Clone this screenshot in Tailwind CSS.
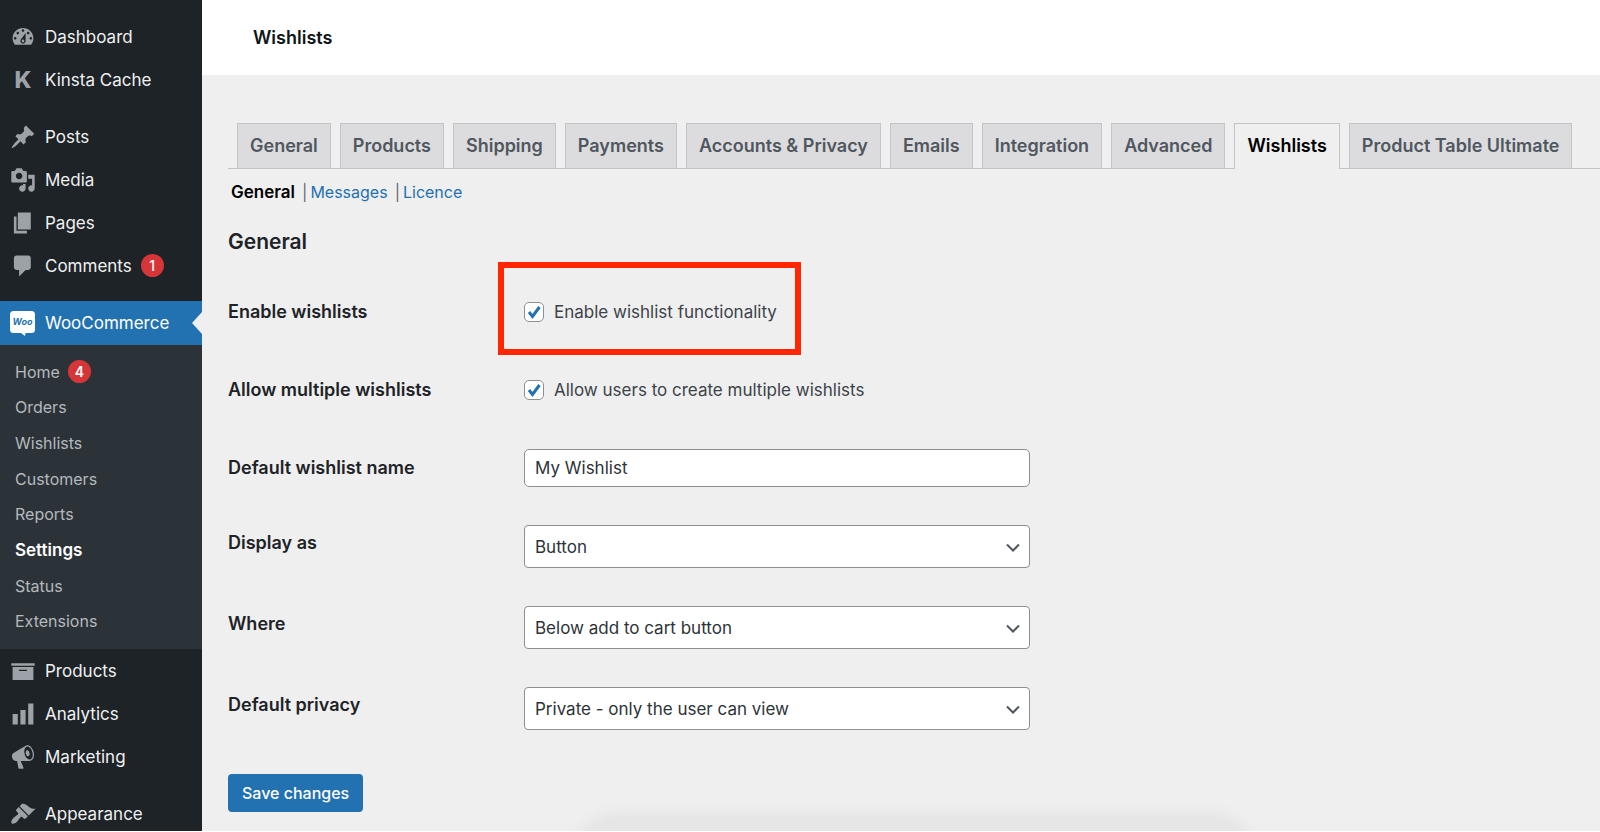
<!DOCTYPE html>
<html lang="en">
<head>
<meta charset="utf-8">
<meta name="viewport" content="width=device-width, initial-scale=1">
<title>Wishlists</title>
<script src="https://cdn.jsdelivr.net/npm/@tailwindcss/browser@4"></script>
</head>
<body class="flex h-screen overflow-hidden border-b border-white bg-[#efefef] font-['Inter','Liberation_Sans',sans-serif] text-[17px] leading-[24px] text-[#1d2327]">

<!-- Admin menu -->
<nav aria-label="Admin menu" class="flex w-[202px] shrink-0 flex-col bg-[#1d2327] pt-[15px] text-[#f0f0f1]">
  <a href="#" class="flex h-[43px] shrink-0 items-center gap-[9px] pl-[10px]">
    <svg class="size-[26px] shrink-0 fill-[#9ca2a7]" viewBox="0 0 20 20" aria-hidden="true"><path d="M3.76 16h12.48c1.1-1.37 1.76-3.11 1.76-5 0-4.42-3.58-8-8-8s-8 3.58-8 8c0 1.89.66 3.63 1.76 5zM10 4c.55 0 1 .45 1 1s-.45 1-1 1-1-.45-1-1 .45-1 1-1zM6 6c.55 0 1 .45 1 1s-.45 1-1 1-1-.45-1-1 .45-1 1-1zm8 0c.55 0 1 .45 1 1s-.45 1-1 1-1-.45-1-1 .45-1 1-1zm-5.37 5.55L12 7v6c0 1.1-.9 2-2 2s-2-.9-2-2c0-.57.24-1.08.63-1.45zM4 10c.55 0 1 .45 1 1s-.45 1-1 1-1-.45-1-1 .45-1 1-1zm12 0c.55 0 1 .45 1 1s-.45 1-1 1-1-.45-1-1 .45-1 1-1zm-5 3c0-.55-.45-1-1-1s-1 .45-1 1 .45 1 1 1 1-.45 1-1z"/></svg>
    Dashboard
  </a>
  <a href="#" class="flex h-[43px] shrink-0 items-center gap-[9px] pl-[10px]">
    <span class="w-[26px] text-center text-[23px] font-extrabold text-[#9ca2a7]" aria-hidden="true">K</span>
    Kinsta Cache
  </a>
  <a href="#" class="mt-[14px] flex h-[43px] shrink-0 items-center gap-[9px] pl-[10px]">
    <svg class="size-[26px] shrink-0 fill-[#9ca2a7]" viewBox="0 0 20 20" aria-hidden="true"><path d="M10.44 3.02l1.82-1.82 6.36 6.35-1.83 1.82c-1.05-.68-2.48-.57-3.41.36l-.75.75c-.92.93-1.04 2.35-.35 3.41l-1.83 1.82-2.41-2.41-2.8 2.79c-.42.42-3.38 2.71-3.8 2.29s1.86-3.39 2.28-3.81l2.79-2.79L4.1 9.36l1.83-1.82c1.05.69 2.48.57 3.4-.36l.75-.75c.93-.92 1.05-2.35.36-3.41z"/></svg>
    Posts
  </a>
  <a href="#" class="flex h-[43px] shrink-0 items-center gap-[9px] pl-[10px]">
    <svg class="size-[26px] shrink-0 fill-[#9ca2a7]" viewBox="0 0 20 20" aria-hidden="true"><path d="M13 11V4c0-.55-.45-1-1-1h-1.67L9 1H5L3.67 3H2c-.55 0-1 .45-1 1v7c0 .55.45 1 1 1h10c.55 0 1-.45 1-1zM7 4.5c1.38 0 2.5 1.12 2.5 2.5S8.38 9.5 7 9.5 4.5 8.38 4.5 7 5.62 4.5 7 4.5zM14 6h5v10.5c0 1.38-1.12 2.5-2.5 2.5S14 17.88 14 16.5s1.12-2.5 2.5-2.5c.17 0 .34.02.5.05V9h-3V6zm-4 8.05V13h2v3.5c0 1.38-1.12 2.5-2.5 2.5S7 17.88 7 16.5 8.12 14 9.5 14c.17 0 .34.02.5.05z"/></svg>
    Media
  </a>
  <a href="#" class="flex h-[43px] shrink-0 items-center gap-[9px] pl-[10px]">
    <svg class="size-[26px] shrink-0 fill-[#9ca2a7]" viewBox="0 0 20 20" aria-hidden="true"><path d="M6 15V2h10v13H6zm-1 1h8v2H3V5h2v11z"/></svg>
    Pages
  </a>
  <a href="#" class="flex h-[43px] shrink-0 items-center gap-[9px] pl-[10px]">
    <svg class="size-[26px] shrink-0 fill-[#9ca2a7]" viewBox="0 0 20 20" aria-hidden="true"><path d="M5 2h9c1.1 0 2 .9 2 2v7c0 1.1-.9 2-2 2h-2l-5 5v-5H5c-1.1 0-2-.9-2-2V4c0-1.1.9-2 2-2z"/></svg>
    <span class="flex items-center gap-[9px]">Comments <span class="flex size-[23px] items-center justify-center rounded-full bg-[#d63638] text-[14px] font-medium text-white">1</span></span>
  </a>

  <a href="#" class="relative mt-[14px] flex h-[44px] shrink-0 items-center gap-[9px] bg-[#2271b1] pl-[10px] text-white">
    <svg class="size-[26px] shrink-0" viewBox="0 0 26 26" aria-hidden="true"><path fill="#fff" d="M3.5 1h18A3.500 3.500 0 0 1 25 4.500v15a3.500 3.500 0 0 1-3.500 3.500H15.500l-.5 3-4-3H3.500A3.500 3.500 0 0 1 0 19.500v-15A3.500 3.500 0 0 1 3.500 1z"/><text x="12.500" y="15" text-anchor="middle" font-family="Inter" font-size="9" font-weight="700" font-style="italic" fill="#2271b1">Woo</text></svg>
    WooCommerce
    <svg class="absolute top-[11px] right-0 h-[22px] w-[10px] fill-[#efefef]" viewBox="0 0 10 22" aria-hidden="true"><path d="M10 0v22L0 11z"/></svg>
  </a>
  <div class="flex h-[304px] shrink-0 flex-col bg-[#2c3338] pt-[9px] pb-[10px] pl-[15px] text-[16px] text-[#b4b9be]">
    <a href="#" class="flex flex-1 items-center gap-[8px]">Home <span class="flex size-[23px] items-center justify-center rounded-full bg-[#d63638] text-[14px] font-semibold text-white">4</span></a>
    <a href="#" class="flex flex-1 items-center">Orders</a>
    <a href="#" class="flex flex-1 items-center">Wishlists</a>
    <a href="#" class="flex flex-1 items-center">Customers</a>
    <a href="#" class="flex flex-1 items-center">Reports</a>
    <a href="#" aria-current="page" class="flex flex-1 items-center text-[17px] font-semibold text-white">Settings</a>
    <a href="#" class="flex flex-1 items-center">Status</a>
    <a href="#" class="flex flex-1 items-center">Extensions</a>
  </div>

  <a href="#" class="flex h-[43px] shrink-0 items-center gap-[9px] pl-[10px]">
    <svg class="size-[26px] shrink-0 fill-[#9ca2a7]" viewBox="0 0 20 20" aria-hidden="true"><path d="M19 4v2H1V4h18zM2 7h16v10H2V7zm11 3V9H7v1h6z"/></svg>
    Products
  </a>
  <a href="#" class="flex h-[43px] shrink-0 items-center gap-[9px] pl-[10px]">
    <svg class="size-[26px] shrink-0 fill-[#9ca2a7]" viewBox="0 0 20 20" aria-hidden="true"><path d="M18 18V2h-4v16h4zm-6 0V7H8v11h4zm-6 0v-8H2v8h4z"/></svg>
    Analytics
  </a>
  <a href="#" class="flex h-[43px] shrink-0 items-center gap-[9px] pl-[10px]">
    <svg class="size-[26px] shrink-0 fill-[#9ca2a7]" viewBox="0 0 20 20" aria-hidden="true"><path d="M18.150 5.940c.46 1.620.38 3.220-.02 4.480-.42 1.280-1.260 2.180-2.300 2.480-.16.06-.26.06-.4.06-.06.02-.12.02-.18.02-.06.02-.14.02-.22.02h-6.800l2.220 5.500c.02.14-.06.26-.14.34-.08.1-.24.16-.34.16H6.950c-.1 0-.26-.06-.34-.16-.08-.08-.16-.2-.14-.34l-1-5.500H4.250l-.02-.02c-.5.06-1.080-.18-1.540-.62s-.88-1.080-1.060-1.880c-.24-.8-.2-1.560-.02-2.200.18-.62.58-1.080 1.060-1.300l.02-.02 9-5.400c.1-.06.18-.1.24-.16.06-.04.14-.08.24-.12.16-.08.28-.12.5-.18 1.040-.3 2.240.1 3.220.98s1.840 2.240 2.260 3.860zm-2.580 5.980h-.02c.4-.1.74-.34 1.040-.7.58-.7.86-1.760.86-3.040 0-.64-.1-1.300-.28-1.980-.34-1.360-1.020-2.500-1.780-3.240s-1.680-1.100-2.460-.88c-.82.22-1.400.96-1.700 2-.32 1.040-.28 2.360.06 3.720.38 1.360 1 2.500 1.800 3.240.78.74 1.620 1.100 2.480.88zm-2.540-7.080c.22-.04.42-.02.62.04.38.16.76.48 1.020 1s.42 1.200.42 1.780c0 .3-.04.56-.12.8-.18.48-.44.84-.86.94-.34.1-.8-.06-1.140-.4s-.64-.86-.78-1.500c-.18-.62-.12-1.240.02-1.720s.48-.84.82-.94z"/></svg>
    Marketing
  </a>
  <a href="#" class="mt-[14px] flex h-[43px] shrink-0 items-center gap-[9px] pl-[10px]">
    <svg class="size-[26px] shrink-0 fill-[#9ca2a7]" viewBox="0 0 20 20" aria-hidden="true"><path d="M14.480 11.060L7.410 3.990l1.500-1.500c.5-.56 2.300-.47 3.510.32 1.210.8 1.430 1.280 2.910 2.100 1.180.64 2.450 1.260 4.450.85zm-.71.71L6.700 4.700 4.930 6.470c-.39.39-.39 1.020 0 1.410l1.060 1.060c.39.39.39 1.030 0 1.420-.6.6-1.430 1.110-2.210 1.690-.35.26-.7.53-1.010.84C1.430 14.230.4 16.080 1.400 17.070c.99 1 2.840-.03 4.180-1.360.31-.31.58-.66.85-1.020.57-.78 1.080-1.610 1.690-2.210.39-.39 1.020-.39 1.410 0l1.060 1.060c.39.39 1.020.39 1.410 0z"/></svg>
    Appearance
  </a>
</nav>

<div class="relative min-w-0 flex-1 overflow-hidden">
  <header class="flex h-[75px] items-center bg-white pl-[51px]">
    <h1 class="text-[18px] font-semibold text-[#101517]">Wishlists</h1>
  </header>

  <main class="pl-[26px]">
    <!-- Settings tabs -->
    <nav aria-label="Settings sections" class="mt-[48px] flex gap-[9px] border-b border-[#c3c4c7] pl-[9px] text-[18px] leading-[24px] font-semibold whitespace-nowrap text-[#50575e]">
      <a href="#" class="border border-b-0 border-[#c3c4c7] bg-[#dcdcde] px-[12px] py-[10px]">General</a>
      <a href="#" class="border border-b-0 border-[#c3c4c7] bg-[#dcdcde] px-[12px] py-[10px]">Products</a>
      <a href="#" class="border border-b-0 border-[#c3c4c7] bg-[#dcdcde] px-[12px] py-[10px]">Shipping</a>
      <a href="#" class="border border-b-0 border-[#c3c4c7] bg-[#dcdcde] px-[12px] py-[10px]">Payments</a>
      <a href="#" class="border border-b-0 border-[#c3c4c7] bg-[#dcdcde] px-[12px] py-[10px]">Accounts &amp; Privacy</a>
      <a href="#" class="border border-b-0 border-[#c3c4c7] bg-[#dcdcde] px-[12px] py-[10px]">Emails</a>
      <a href="#" class="border border-b-0 border-[#c3c4c7] bg-[#dcdcde] px-[12px] py-[10px]">Integration</a>
      <a href="#" class="border border-b-0 border-[#c3c4c7] bg-[#dcdcde] px-[12px] py-[10px]">Advanced</a>
      <a href="#" aria-current="page" class="-mb-px border border-b-0 border-[#c3c4c7] bg-[#efefef] px-[12px] py-[10px] text-black">Wishlists</a>
      <a href="#" class="border border-b-0 border-[#c3c4c7] bg-[#dcdcde] px-[12px] py-[10px]">Product Table Ultimate</a>
    </nav>

    <div class="mt-[11px] flex pl-[3px] text-[16px] leading-[24px] text-[#646970]">
      <a href="#" aria-current="page" class="text-[17px] font-semibold text-black">General</a>
      <span class="pr-[3px] pl-[7px]">|</span>
      <a href="#" class="text-[#2271b1]">Messages</a>
      <span class="pr-[3px] pl-[7px]">|</span>
      <a href="#" class="text-[#2271b1]">Licence</a>
    </div>

    <form>
      <h2 class="mt-[22px] text-[21px] leading-[32px] font-semibold">General</h2>

      <div class="mt-[15px] flex h-[78px] items-center">
        <div class="w-[296px] shrink-0 text-[18px] font-semibold">Enable wishlists</div>
        <div class="relative">
          <label class="flex items-center gap-[10px] text-[#3c434a]">
            <span class="relative size-[20px]">
              <input type="checkbox" checked class="peer block size-[20px] appearance-none rounded-[5px] border border-[#8c8f94] bg-white">
              <svg class="pointer-events-none absolute inset-0 hidden size-[20px] fill-none stroke-[#2271b1] stroke-3 peer-checked:block" viewBox="0 0 20 20" aria-hidden="true"><path d="M5 10l3.500 4.500L15.500 5"/></svg>
            </span>
            Enable wishlist functionality
          </label>
          <div class="pointer-events-none absolute -top-[38px] -right-[24px] -bottom-[31px] -left-[26px] border-6 border-[#ff2600]"></div>
        </div>
      </div>

      <div class="flex h-[78px] items-center">
        <div class="w-[296px] shrink-0 text-[18px] font-semibold">Allow multiple wishlists</div>
        <label class="flex items-center gap-[10px] text-[#3c434a]">
          <span class="relative size-[20px]">
            <input type="checkbox" checked class="peer block size-[20px] appearance-none rounded-[5px] border border-[#8c8f94] bg-white">
            <svg class="pointer-events-none absolute inset-0 hidden size-[20px] fill-none stroke-[#2271b1] stroke-3 peer-checked:block" viewBox="0 0 20 20" aria-hidden="true"><path d="M5 10l3.500 4.500L15.500 5"/></svg>
          </span>
          Allow users to create multiple wishlists
        </label>
      </div>

      <div class="flex h-[77px] items-center">
        <label for="list-name" class="w-[296px] shrink-0 text-[18px] font-semibold">Default wishlist name</label>
        <input id="list-name" type="text" value="My Wishlist" class="h-[38px] w-full max-w-[506px] rounded-[5px] border border-[#8c8f94] bg-white px-[10px] text-[#2c3338]">
      </div>

      <div class="flex items-start py-[19px]">
        <label for="display" class="w-[296px] shrink-0 pt-[6px] text-[18px] leading-[24px] font-semibold">Display as</label>
        <div class="relative w-full max-w-[506px]">
          <select id="display" class="block h-[43px] w-full appearance-none rounded-[4px] border border-[#8c8f94] bg-white px-[10px] text-[#2c3338]"><option>Button</option></select>
          <svg class="pointer-events-none absolute top-[18px] right-[10px] h-[9px] w-[14px] fill-none stroke-[#50575e] stroke-2" viewBox="0 0 14 9" aria-hidden="true"><path d="M1 1.500l6 6 6-6"/></svg>
        </div>
      </div>

      <div class="flex items-start py-[19px]">
        <label for="where" class="w-[296px] shrink-0 pt-[6px] text-[18px] leading-[24px] font-semibold">Where</label>
        <div class="relative w-full max-w-[506px]">
          <select id="where" class="block h-[43px] w-full appearance-none rounded-[4px] border border-[#8c8f94] bg-white px-[10px] text-[#2c3338]"><option>Below add to cart button</option></select>
          <svg class="pointer-events-none absolute top-[18px] right-[10px] h-[9px] w-[14px] fill-none stroke-[#50575e] stroke-2" viewBox="0 0 14 9" aria-hidden="true"><path d="M1 1.500l6 6 6-6"/></svg>
        </div>
      </div>

      <div class="flex items-start py-[19px]">
        <label for="privacy" class="w-[296px] shrink-0 pt-[6px] text-[18px] leading-[24px] font-semibold">Default privacy</label>
        <div class="relative w-full max-w-[506px]">
          <select id="privacy" class="block h-[43px] w-full appearance-none rounded-[4px] border border-[#8c8f94] bg-white px-[10px] text-[#2c3338]"><option>Private - only the user can view</option></select>
          <svg class="pointer-events-none absolute top-[18px] right-[10px] h-[9px] w-[14px] fill-none stroke-[#50575e] stroke-2" viewBox="0 0 14 9" aria-hidden="true"><path d="M1 1.500l6 6 6-6"/></svg>
        </div>
      </div>

      <button type="submit" class="mt-[25px] block h-[38px] rounded-[4px] bg-[#2271b1] px-[14px] text-[16px] font-medium text-white">Save changes</button>
    </form>
  </main>

  <!-- Soft shade rising from the bottom edge -->
  <div class="pointer-events-none absolute -bottom-[80px] left-[372px] h-[94px] w-[680px] rounded-[70px] bg-[#e6e6e6] shadow-[0_0_12px_6px_#e6e6e6]"></div>
</div>
</body>
</html>
